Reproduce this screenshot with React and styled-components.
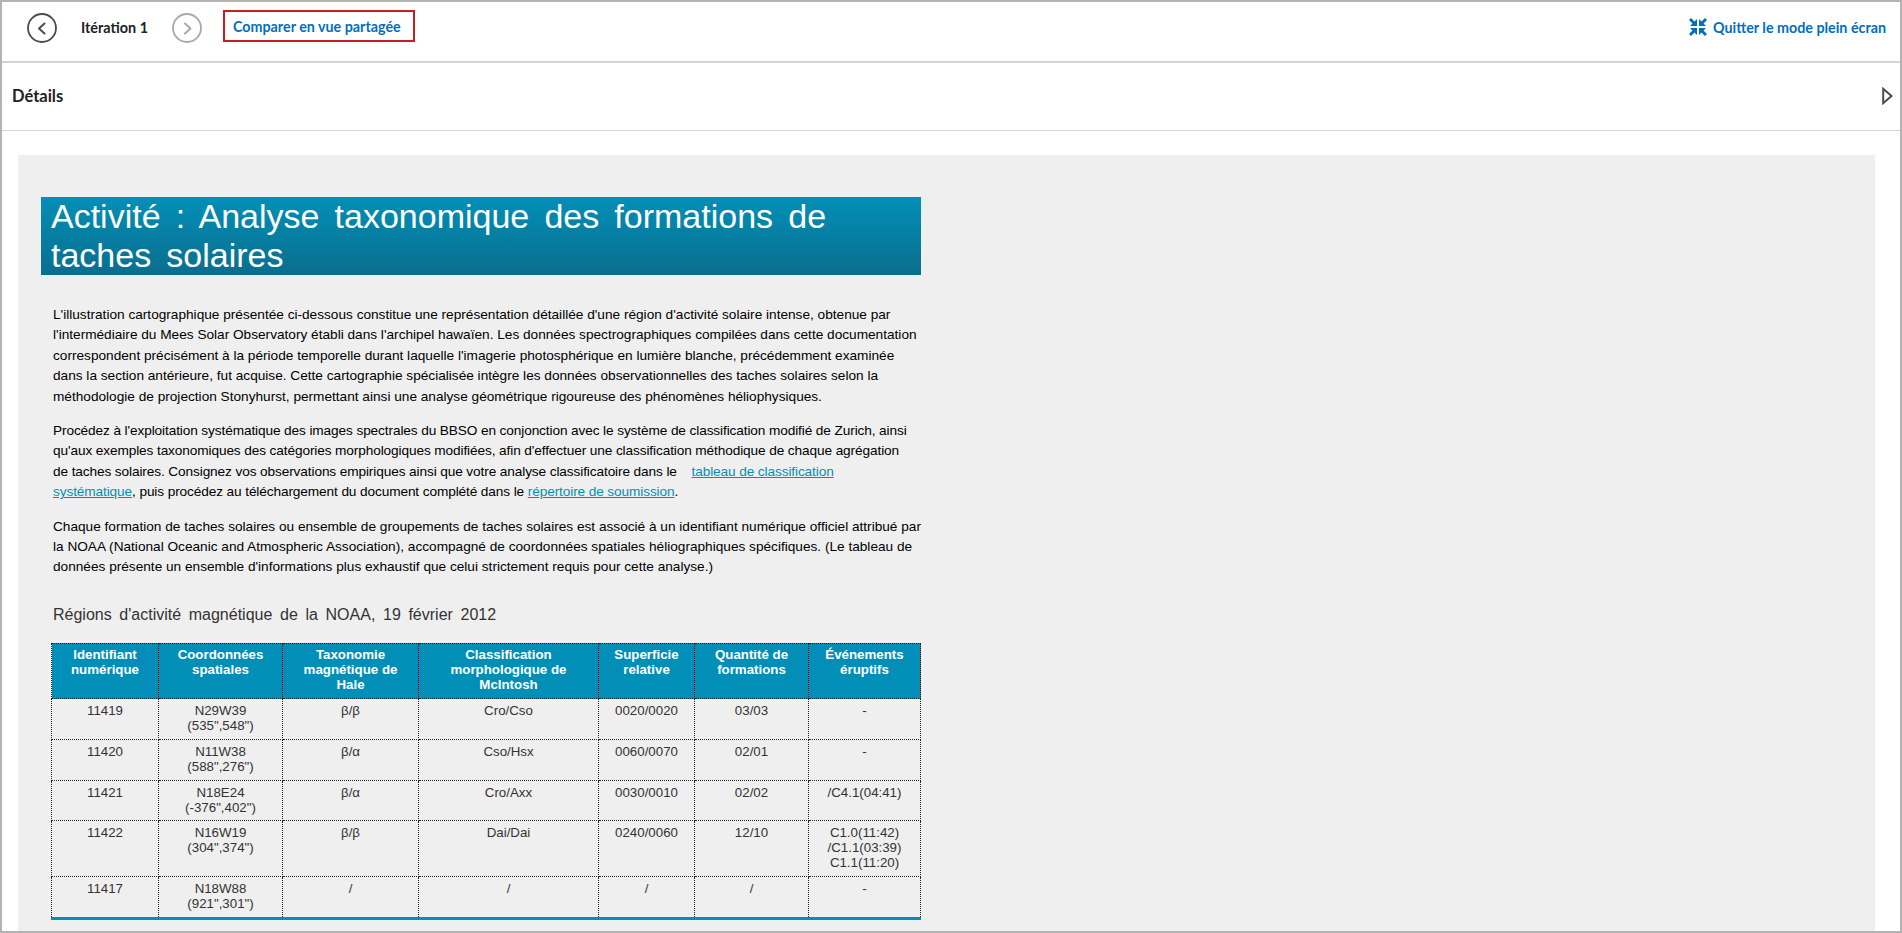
import React from "react";
import styled, { createGlobalStyle } from "styled-components";

const rows = [
  ["11419", ["N29W39", '(535",548")'], "β/β", "Cro/Cso", "0020/0020", "03/03", ["-"]],
  ["11420", ["N11W38", '(588",276")'], "β/α", "Cso/Hsx", "0060/0070", "02/01", ["-"]],
  ["11421", ["N18E24", '(-376",402")'], "β/α", "Cro/Axx", "0030/0010", "02/02", ["/C4.1(04:41)"]],
  ["11422", ["N16W19", '(304",374")'], "β/β", "Dai/Dai", "0240/0060", "12/10", ["C1.0(11:42)", "/C1.1(03:39)", "C1.1(11:20)"]],
  ["11417", ["N18W88", '(921",301")'], "/", "/", "/", "/", ["-"]],
];

const columns = [
  { width: 107, label: "Identifiant numérique" },
  { width: 124, label: "Coordonnées spatiales" },
  { width: 136, label: "Taxonomie magnétique de Hale" },
  { width: 180, label: "Classification morphologique de McIntosh" },
  { width: 96, label: "Superficie relative" },
  { width: 114, label: "Quantité de formations" },
  { width: 112, label: "Événements éruptifs" },
];

const Lines = ({ items }) => items.map(item => <div key={item}>{item}</div>);

const App = () => {
  return (
    <Frame>
      <GlobalStyle />
      <TopBar>
        <IterationNav>
          <CircleButton>
            <svg width="30" height="30" viewBox="0 0 30 30" fill="none">
              <circle cx="15" cy="15" r="14" stroke="currentColor" strokeWidth="1.8" />
              <path d="M17.500 10.500L12 15.500 17.500 20.500" stroke="currentColor" strokeWidth="2" strokeLinecap="round" strokeLinejoin="round" />
            </svg>
          </CircleButton>
          <IterationLabel>Itération 1</IterationLabel>
          <CircleButton $disabled>
            <svg width="30" height="30" viewBox="0 0 30 30" fill="none">
              <circle cx="15" cy="15" r="14" stroke="currentColor" strokeWidth="1.8" />
              <path d="M13 10.500L18.500 15.500 13 20.500" stroke="currentColor" strokeWidth="2" strokeLinecap="round" strokeLinejoin="round" />
            </svg>
          </CircleButton>
          <CompareLink>Comparer en vue partagée</CompareLink>
        </IterationNav>
        <ExitLink>
          <svg width="18" height="18" viewBox="0 0 18 18" fill="currentColor">
            <path d="M0 2L2 0 5.500 3.500 8 1V8H1L3.500 5.500z" />
            <path d="M18 2L16 0 12.500 3.500 10 1V8H17L14.500 5.500z" />
            <path d="M0 16L2 18 5.500 14.500 8 17V10H1L3.500 12.500z" />
            <path d="M18 16L16 18 12.500 14.500 10 17V10H17L14.500 12.500z" />
          </svg>
          Quitter le mode plein écran
        </ExitLink>
      </TopBar>
      <DetailsBar>
        <DetailsTitle>Détails</DetailsTitle>
        <svg width="11" height="18" viewBox="0 0 11 18" fill="none">
          <path d="M1.200 1.800L9.500 9 1.200 16.200z" stroke="#494c4e" strokeWidth="2" />
        </svg>
      </DetailsBar>
      <Content>
        <Panel>
          <Article>
            <Title>Activité : Analyse taxonomique des formations de taches solaires</Title>
            <Body>
              <Paragraph>
                L'illustration cartographique présentée ci-dessous constitue une représentation détaillée d'une région d'activité solaire intense, obtenue par l'intermédiaire du Mees Solar Observatory établi dans l'archipel hawaïen. Les données spectrographiques compilées dans cette documentation correspondent précisément à la période temporelle durant laquelle l'imagerie photosphérique en lumière blanche, précédemment examinée dans la section antérieure, fut acquise. Cette cartographie spécialisée intègre les données observationnelles des taches solaires selon la méthodologie de projection Stonyhurst, permettant ainsi une analyse géométrique rigoureuse des phénomènes héliophysiques.
              </Paragraph>
              <Paragraph $tracking="-0.11px" $measure="859px">
                Procédez à l'exploitation systématique des images spectrales du BBSO en conjonction avec le système de classification modifié de Zurich, ainsi qu'aux exemples taxonomiques des catégories morphologiques modifiées, afin d'effectuer une classification méthodique de chaque agrégation de taches solaires. Consignez vos observations empiriques ainsi que votre analyse classificatoire dans le&nbsp;&nbsp;&nbsp; <DocLink>tableau de classification systématique</DocLink>, puis procédez au téléchargement du document complété dans le <DocLink>répertoire de soumission</DocLink>.
              </Paragraph>
              <Paragraph>
                Chaque formation de taches solaires ou ensemble de groupements de taches solaires est associé à un identifiant numérique officiel attribué par la NOAA (National Oceanic and Atmospheric Association), accompagné de coordonnées spatiales héliographiques spécifiques. (Le tableau de données présente un ensemble d'informations plus exhaustif que celui strictement requis pour cette analyse.)
              </Paragraph>
            </Body>
            <TableTitle>Régions d'activité magnétique de la NOAA, 19 février 2012</TableTitle>
            <DataTable>
              <colgroup>
                {columns.map(column => (
                  <col key={column.label} width={column.width} />
                ))}
              </colgroup>
              <thead>
                <tr>
                  {columns.map(column => (
                    <HeadCell key={column.label}>{column.label}</HeadCell>
                  ))}
                </tr>
              </thead>
              <tbody>
                {rows.map(row => (
                  <tr key={row[0]}>
                    <Cell>{row[0]}</Cell>
                    <Cell><Lines items={row[1]} /></Cell>
                    <Cell>{row[2]}</Cell>
                    <Cell>{row[3]}</Cell>
                    <Cell>{row[4]}</Cell>
                    <Cell>{row[5]}</Cell>
                    <Cell><Lines items={row[6]} /></Cell>
                  </tr>
                ))}
              </tbody>
            </DataTable>
          </Article>
        </Panel>
      </Content>
    </Frame>
  );
};

const GlobalStyle = createGlobalStyle`
  html, body {
    margin: 0;
    height: 100%;
    overflow: hidden;
    background: #fff;
  }

  * {
    box-sizing: border-box;
  }
`;

const Frame = styled.div`
  display: flex;
  flex-direction: column;
  height: 933px;
  overflow: hidden;
  border: 2px solid #b3b3b3;
  background: #fff;
  font-family: "Lato", sans-serif;
`;

const TopBar = styled.div`
  display: flex;
  flex: none;
  align-items: center;
  justify-content: space-between;
  height: 61px;
  padding: 0 14px 7px 25px;
  border-bottom: 2px solid #cdd5dc;
`;

const IterationNav = styled.div`
  display: flex;
  align-items: center;
`;

const CircleButton = styled.div`
  display: flex;
  width: 30px;
  height: 30px;
  color: ${({ $disabled }) => ($disabled ? "#a9a9a9" : "#494c4e")};
`;

const IterationLabel = styled.span`
  width: 91px;
  margin-left: 24px;
  padding-bottom: 2px;
  color: #202122;
  font-size: 14.4px;
  font-weight: 700;
`;

const CompareLink = styled.div`
  margin: -4px 0 0 21px;
  padding: 7px 12px 5px 8px;
  border: 2px solid #c81e1e;
  color: #006fbf;
  font-size: 14.3px;
  font-weight: 700;
  line-height: 16px;
`;

const ExitLink = styled.div`
  display: flex;
  gap: 6px;
  align-items: center;
  margin-bottom: 2px;
  color: #006fbf;
  font-size: 14.3px;
  font-weight: 700;
`;

const DetailsBar = styled.div`
  display: flex;
  flex: none;
  align-items: center;
  justify-content: space-between;
  height: 68px;
  padding: 0 7px 2px 10px;
  border-bottom: 1px solid #cdd5dc;
`;

const DetailsTitle = styled.div`
  color: #202122;
  font-size: 16.5px;
  font-weight: 700;
`;

const Content = styled.div`
  flex: 1;
  min-height: 0;
  padding: 24px 25px 0 16px;
`;

const Panel = styled.div`
  height: 100%;
  overflow: hidden;
  padding: 42px 23px 0;
  background: #efefef;
`;

const Article = styled.div`
  width: 880px;
`;

const Title = styled.h1`
  margin: 0;
  padding: 0 40px 0 10px;
  background: linear-gradient(#028fb7, #0a6e8e);
  color: #fff;
  font-family: "Liberation Sans", sans-serif;
  font-size: 34px;
  font-weight: 400;
  line-height: 39px;
  word-spacing: 5.700px;
`;

const Body = styled.div`
  width: 881px;
  padding: 30px 0 0 12px;
`;

const Paragraph = styled.p`
  max-width: ${({ $measure }) => $measure || "none"};
  margin: 0 0 14px;
  color: #000;
  font-family: "Liberation Sans", sans-serif;
  font-size: 13.65px;
  line-height: 20.4px;
  letter-spacing: ${({ $tracking }) => $tracking || "normal"};
`;

const DocLink = styled.a`
  color: #028fb7;
  text-decoration: underline;
`;

const TableTitle = styled.h3`
  margin: 26px 0 17px 12px;
  color: #333;
  font-family: "Liberation Sans", sans-serif;
  font-size: 16px;
  font-weight: 400;
  line-height: 22px;
  word-spacing: 3.200px;
`;

const DataTable = styled.table`
  width: 869px;
  margin-left: 10px;
  border-collapse: collapse;
  table-layout: fixed;
  border-bottom: 3px solid #028fb7;
  font-family: "Liberation Sans", sans-serif;
  font-size: 13.3px;
  line-height: 14.85px;
`;

const HeadCell = styled.th`
  padding: 4px 8px 6px;
  border: 1px dotted #222;
  background: #028fb7;
  color: #fff;
  font-weight: 700;
  vertical-align: top;
`;

const Cell = styled.td`
  padding: 5px 4px;
  border: 1px dotted #222;
  color: #333;
  text-align: center;
  vertical-align: top;
`;

export default App;
